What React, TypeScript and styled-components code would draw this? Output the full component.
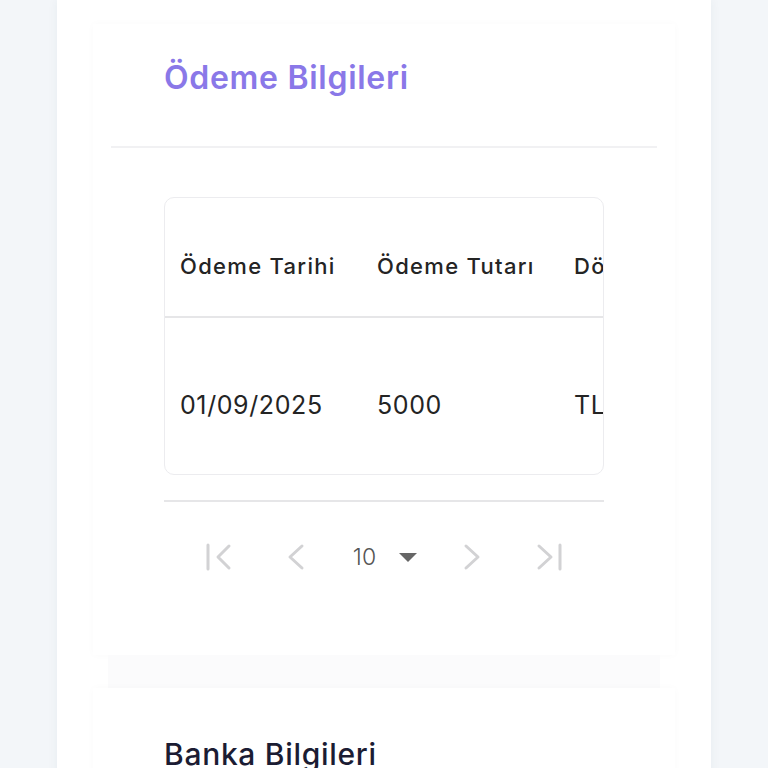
import { FC } from "react";
import styled, { createGlobalStyle } from "styled-components";

const GlobalStyle = createGlobalStyle`
  html, body {
    margin: 0;
    padding: 0;
    background: #f3f6f9;
    font-family: "Inter", "Noto Sans", sans-serif;
  }
`;

const Shell = styled.div`
  width: 654px;
  margin: 0 auto;
  min-height: 768px;
  background: #ffffff;
  box-shadow: 0 0 10px rgba(40, 60, 90, 0.06);
  padding-top: 24px;
  overflow: hidden;
`;

const Section = styled.section`
  margin: 0 36px;
  background: #ffffff;
  box-shadow: 0 0 8px rgba(0, 0, 0, 0.025);
`;

const SectionHeader = styled.div`
  margin: 0 18px;
  padding: 32px 0 0 53px;
  height: 124px;
  border-bottom: 2px solid #f1f1f3;
  box-sizing: border-box;
`;

const Title = styled.h2<{ $accent?: boolean }>`
  margin: 0;
  font-size: ${(p) => (p.$accent ? "32px" : "30px")};
  font-weight: ${(p) => (p.$accent ? 600 : 500)};
  color: ${(p) => (p.$accent ? "#8a78e8" : "#1b1c33")};
  line-height: 44px;
  letter-spacing: 0.7px;
`;

const SectionBody = styled.div`
  padding: 49px 71px 0;
  height: 458px;
`;

const TableCard = styled.div`
  width: 440px;
  border: 1px solid #ececef;
  border-radius: 10px;
  overflow: hidden;
  box-sizing: border-box;
`;

const Row = styled.div<{ $head?: boolean }>`
  display: grid;
  grid-template-columns: 197px 197px 197px;
  height: ${(p) => (p.$head ? "120px" : "156px")};
  padding-top: 18px;
  align-items: center;
  border-bottom: ${(p) => (p.$head ? "2px solid #e6e6e8" : "none")};
  box-sizing: border-box;
`;

const Cell = styled.div<{ $head?: boolean }>`
  padding-left: 15px;
  white-space: nowrap;
  font-size: ${(p) => (p.$head ? "22px" : "25px")};
  letter-spacing: ${(p) => (p.$head ? "1.3px" : "0.6px")};
  font-weight: ${(p) => (p.$head ? 500 : 400)};
  color: #242424;
`;

const Footer = styled.div`
  width: 440px;
  margin-top: 25px;
  border-top: 2px solid #e6e6e8;
  height: 110px;
  display: flex;
  align-items: center;
  justify-content: center;
`;

const PageBtn = styled.div<{ $gap?: number }>`
  width: 28px;
  margin-left: ${(p) => p.$gap ?? 0}px;
  display: flex;
  justify-content: center;
  align-items: center;
  color: #d2d2d4;
`;

const PageSize = styled.div`
  display: flex;
  align-items: center;
  gap: 23px;
  margin: 0 41px 0 43px;
  font-size: 23px;
  color: #555;
  font-weight: 300;
`;

const Gap = styled.div`
  height: 33px;
  margin: 0 51px;
  background: #fbfbfc;
`;

const BankHeader = styled.div`
  padding: 44px 0 0 71px;
`;

const paths = {
  first: "M4 2v24 M25 3L14 14l11 11",
  prev: "M20 3L8 14l12 11",
  next: "M8 3l12 11L8 25",
  last: "M3 3l12 11L3 25 M24 2v24",
};

const Icon: FC<{ kind: keyof typeof paths }> = ({ kind }) => (
  <svg width="28" height="28" viewBox="0 0 28 28" fill="none">
    <path d={paths[kind]} stroke="currentColor" strokeWidth="3" strokeLinecap="round" strokeLinejoin="round" />
  </svg>
);

const Caret = () => (
  <svg width="18" height="9" viewBox="0 0 18 9">
    <path d="M0 0h18L9 9z" fill="#666" />
  </svg>
);

export default function App() {
  return (
    <>
      <GlobalStyle />
      <Shell>
        <Section>
          <SectionHeader>
            <Title $accent>Ödeme Bilgileri</Title>
          </SectionHeader>
          <SectionBody>
            <TableCard>
              <Row $head>
                <Cell $head>Ödeme Tarihi</Cell>
                <Cell $head>Ödeme Tutarı</Cell>
                <Cell $head>Döviz Cinsi</Cell>
              </Row>
              <Row>
                <Cell>01/09/2025</Cell>
                <Cell>5000</Cell>
                <Cell>TL</Cell>
              </Row>
            </TableCard>
            <Footer>
              <PageBtn>
                <Icon kind="first" />
              </PageBtn>
              <PageBtn $gap={50}>
                <Icon kind="prev" />
              </PageBtn>
              <PageSize>
                <span>10</span>
                <Caret />
              </PageSize>
              <PageBtn>
                <Icon kind="next" />
              </PageBtn>
              <PageBtn $gap={50}>
                <Icon kind="last" />
              </PageBtn>
            </Footer>
          </SectionBody>
        </Section>
        <Gap />
        <Section>
          <BankHeader>
            <Title>Banka Bilgileri</Title>
          </BankHeader>
        </Section>
      </Shell>
    </>
  );
}
